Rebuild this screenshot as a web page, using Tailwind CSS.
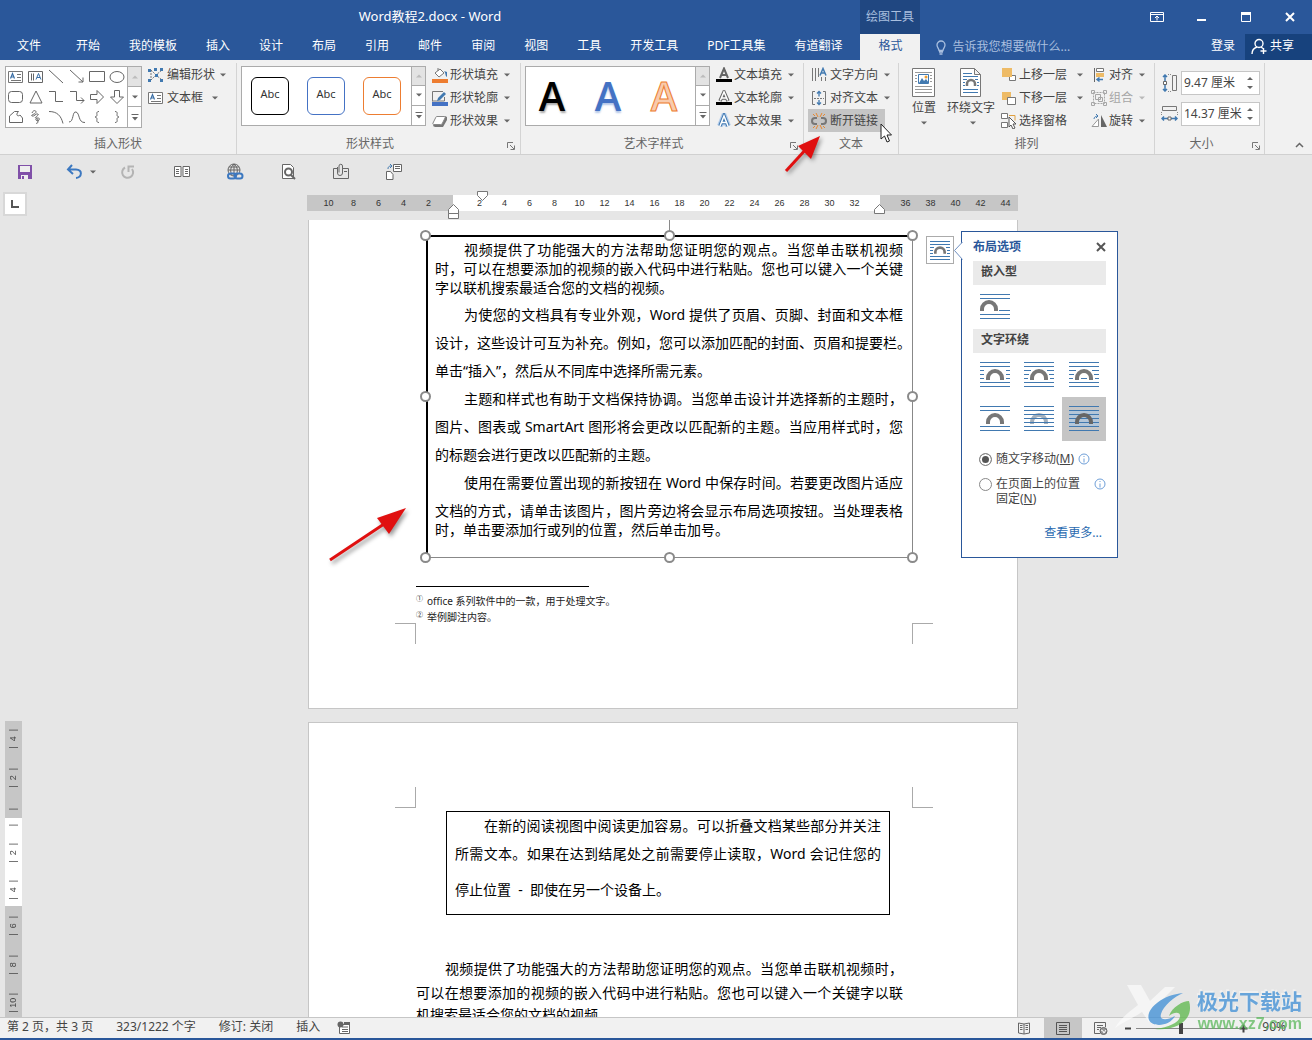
<!DOCTYPE html>
<html lang="zh-CN">
<head>
<meta charset="utf-8">
<title>Word教程2.docx - Word</title>
<script src="https://cdn.jsdelivr.net/npm/@tailwindcss/browser@4"></script>
</head>
<body class="relative flex h-screen flex-col overflow-hidden bg-[#e6e6e6] font-['Noto_Sans','Noto_Sans_CJK_SC',sans-serif] text-xs text-[#444]">

<!-- shared icons -->
<svg class="hidden">
  <symbol id="down" viewBox="0 0 6 4"><path d="M0 .5h6L3 3.5z" fill="#666"/></symbol>
  <symbol id="more" viewBox="0 0 8 7"><path d="M.5.5h7" stroke="#666"/><path d="M1 3h6L4 6.500z" fill="#666"/></symbol>
  <symbol id="launch" viewBox="0 0 8 8"><path d="M.5 6V.5H6M3 3l4 4M7.5 3.500v4h-4" fill="none" stroke="#777"/></symbol>
  <symbol id="arch" viewBox="0 0 18 11"><path d="M2 11V9a7 7 0 0 1 14 0v2" fill="none" stroke="currentColor" stroke-width="4"/></symbol>
  <symbol id="tbox" viewBox="0 0 16 14"><path d="M.5 1.500h14v11H.5z" fill="#fff" stroke="#777"/><path d="M9 4.500h4M9 7.500h4M3 10.500h10" stroke="#777"/><path d="M2.500 8.500l2-5 2 5M3.200 7h2.800" fill="none" stroke="#3a6ea5" stroke-width="1.200"/></symbol>
</svg>

<header class="flex h-[60px] shrink-0 flex-col bg-[#2a579a] text-white">
  <div class="flex h-[34px] items-center">
    <h1 class="w-[860px] text-center text-[13px]">Word教程2.docx - Word</h1>
    <div class="flex h-full w-[60px] items-center justify-center bg-[#204781] text-[#a9bfdf]">绘图工具</div>
    <div class="ml-auto flex items-center gap-8 pr-4">
      <button aria-label="功能区显示选项"><svg width="14" height="12" fill="none" stroke="#fff"><path d="M.5 1.500h13v9H.5zM.5 3.500h13M7 9.500V5M5 7l2-2 2 2"/></svg></button>
      <button aria-label="最小化"><svg width="12" height="12"><path d="M1 9h9" stroke="#fff" stroke-width="2"/></svg></button>
      <button aria-label="最大化"><svg width="12" height="12" fill="none" stroke="#fff"><path d="M1.500 2.500h9v8h-9z"/><path d="M1 2.500h10" stroke-width="3"/></svg></button>
      <button aria-label="关闭"><svg width="12" height="12"><path d="M2 2l8 8M10 2l-8 8" stroke="#fff" stroke-width="2"/></svg></button>
    </div>
  </div>
  <nav class="flex h-[26px] items-center pl-[3px] whitespace-nowrap [&>a]:mr-px [&>a]:self-start [&>a]:px-[14px] [&>a]:leading-6">
    <a href="#">文件</a><span class="w-1.5"></span>
    <a href="#">开始</a><a href="#">我的模板</a><a href="#">插入</a><a href="#">设计</a><a href="#">布局</a><a href="#">引用</a><a href="#">邮件</a><a href="#">审阅</a><a href="#">视图</a><a href="#">工具</a><a href="#">开发工具</a><a href="#">PDF工具集</a><a href="#">有道翻译</a>
    <button class="ml-[3px] h-full w-[60px] shrink-0 bg-[#f1f1f1] pb-0.5 text-[#2a579a]">格式</button>
    <button class="ml-4 flex items-center gap-1.5 text-[#a9bfdf]"><svg width="10" height="15" fill="none" stroke="#a9bfdf" stroke-width="1.300"><path d="M3 10.500C3 8.500 1 7.500 1 5a4 4 0 0 1 8 0c0 2.500-2 3.500-2 5.500zM3 12h4M3.500 14h3"/></svg>告诉我您想要做什么...</button>
    <button class="ml-auto px-2.5 pb-0.5">登录</button>
    <button class="flex h-full w-[67px] items-center gap-0.5 bg-[#17427d] pb-0.5 pl-1.5"><svg width="17" height="17" fill="none" stroke="#fff" stroke-width="1.400"><circle cx="8" cy="5.500" r="4"/><path d="M1 16c0-4 2-6 5-7M10 9l2 1.500M12.500 10v6M9.500 13h6"/></svg>共享</button>
  </nav>
</header>

<!-- ribbon -->
<div class="flex h-[95px] shrink-0 border-b border-[#d0d0d0] bg-[#f1f1f1] pt-[3px] whitespace-nowrap">
  <section class="flex w-[237px] shrink-0 flex-col border-r border-[#d4d4d4]">
    <div class="flex h-[71px] shrink-0 pl-[5px]">
      <div class="mt-[3px] flex h-[62px] w-[137px] border border-[#ababab] bg-white">
        <div class="grid flex-1 grid-cols-6 grid-rows-3 [&_svg]:h-4 [&_svg]:w-4 [&_svg]:fill-none [&_svg]:stroke-[#666] [&>button]:flex [&>button]:items-center [&>button]:justify-center">
          <button aria-label="文本框"><svg><use href="#tbox" width="16" height="14" y="1"/></svg></button>
          <button aria-label="竖排文本框"><svg><path d="M.5 2.500h14v11H.5zM3.500 4.500v7M5.500 4.500v7"/><path d="M8 10.500l2.500-6 2.500 6M9 8.500h3" stroke="#3a6ea5"/></svg></button>
          <button aria-label="直线"><svg><path d="M1 1l14 13"/></svg></button>
          <button aria-label="箭头"><svg><path d="M1 1l13 12M14 8.500V13H9.500"/></svg></button>
          <button aria-label="矩形"><svg><path d="M.5 2.500h15v10H.5z"/></svg></button>
          <button aria-label="椭圆"><svg><ellipse cx="8" cy="8" rx="7" ry="5.500"/></svg></button>
          <button aria-label="圆角矩形"><svg><rect x=".5" y="2.500" width="14" height="11" rx="3"/></svg></button>
          <button aria-label="三角形"><svg><path d="M8 2l6 12H2z"/></svg></button>
          <button aria-label="肘形线"><svg><path d="M1 2.500h6.500v10H15"/></svg></button>
          <button aria-label="肘形箭头"><svg><path d="M1 2.500h6.500v9H15M12 8.500l3 3-3 3"/></svg></button>
          <button aria-label="右箭头"><svg><path d="M1.500 5.500H8V1.500L14.500 8 8 14.500v-4H1.500z"/></svg></button>
          <button aria-label="下箭头"><svg><path d="M5.500 1.500h5V8h4L8 14.500 1.500 8h4z"/></svg></button>
          <button aria-label="任意多边形"><svg><path d="M1.500 13.500V7l5-4.500h4C7 6 10 8 12 6l2.500 3v4.500z"/></svg></button>
          <button aria-label="自由曲线"><svg><path d="M4 4c1-3 4-3 4-1S2 6 4 7s4-3 6-2-5 4-2 4 4 0 3 2-4 0-3-1 2 0 2 2-1 3-2 2"/></svg></button>
          <button aria-label="弧形"><svg><path d="M1 2.500c8 0 12 4 14 12"/></svg></button>
          <button aria-label="曲线"><svg><path d="M0 13C5 13 3 2 7 3s2 11 9 10.500"/></svg></button>
          <button aria-label="左大括号"><svg><path d="M10 2.500C7 2.500 8 5 8 6S7 8 6 8c1 0 2 1 2 2s-1 3.500 2 3.500"/></svg></button>
          <button aria-label="右大括号"><svg><path d="M6 2.500c3 0 2 2.500 2 3.500s1 2 2 2c-1 0-2 1-2 2s1 3.500-2 3.500"/></svg></button>
        </div>
        <div class="grid w-[14px] grid-rows-3 divide-y divide-[#ababab] border-l border-[#ababab] [&>button]:flex [&>button]:items-center [&>button]:justify-center">
          <button aria-label="上一行" class="bg-[#e3e3e3]"><svg class="rotate-180 opacity-30" width="6" height="4"><use href="#down"/></svg></button>
          <button aria-label="下一行"><svg width="6" height="4"><use href="#down"/></svg></button>
          <button aria-label="更多形状"><svg width="8" height="7"><use href="#more"/></svg></button>
        </div>
      </div>
      <div class="ml-1.5 flex flex-col [&>button]:flex [&>button]:h-[23px] [&>button]:items-center [&>button]:gap-[3px]">
        <button><svg width="16" height="16"><path d="M3 3l5 5 6-5M3 13l5-5 6 5M3 3v10" fill="none" stroke="#777" stroke-dasharray="2 1"/><path d="M0 2h3v3H0zM6 1h3v3H6zM12 1h3v3h-3zM0 12h3v3H0zM7 7h3v3H7zM12 12h3v3h-3z" fill="#4179b0"/></svg>编辑形状<svg class="ml-0.5" width="6" height="4"><use href="#down"/></svg></button>
        <button><svg width="16" height="14"><use href="#tbox"/></svg>文本框<svg class="ml-1.5" width="6" height="4"><use href="#down"/></svg></button>
      </div>
    </div>
    <h2 class="text-center leading-5 text-[#666]">插入形状</h2>
  </section>

  <section class="flex w-[284px] shrink-0 flex-col border-r border-[#d4d4d4]">
    <div class="flex h-[71px] shrink-0 pl-1">
      <div class="mt-[3px] flex h-[60px] w-[185px] border border-[#ababab] bg-white">
        <div class="flex flex-1 items-center gap-[18px] pl-[9px] text-[11px] text-[#333] [&>button]:h-[38px] [&>button]:w-[38px] [&>button]:rounded-md [&>button]:border [&>button]:pb-1">
          <button class="border-black">Abc</button>
          <button class="border-[#4472c4]">Abc</button>
          <button class="border-[#ed7d31]">Abc</button>
        </div>
        <div class="grid w-[14px] grid-rows-3 divide-y divide-[#ababab] border-l border-[#ababab] [&>button]:flex [&>button]:items-center [&>button]:justify-center">
          <button aria-label="上一行" class="bg-[#e3e3e3]"><svg class="rotate-180 opacity-30" width="6" height="4"><use href="#down"/></svg></button>
          <button aria-label="下一行"><svg width="6" height="4"><use href="#down"/></svg></button>
          <button aria-label="更多样式"><svg width="8" height="7"><use href="#more"/></svg></button>
        </div>
      </div>
      <div class="ml-1.5 flex flex-col [&>button]:flex [&>button]:h-[23px] [&>button]:items-center [&>button]:gap-0.5">
        <button><svg width="16" height="16"><path d="M3 6l5-4 4 4-5 4zM6 4V1" fill="#fff" stroke="#777"/><path d="M12 4l3 1v5c-2-1-1-4-3-6z" fill="#4179b0"/><path d="M0 12h16v4H0z" fill="#ed7d31"/></svg>形状填充<svg class="ml-1" width="6" height="4"><use href="#down"/></svg></button>
        <button><svg width="16" height="16"><path d="M11 1.500H.5v10M.5 11h12V7" fill="none" stroke="#777"/><path d="M5 11l1-3 6-6 2 2-6 6z" fill="#4179b0"/><path d="M0 12h16v4H0z" fill="#4472c4"/></svg>形状轮廓<svg class="ml-1" width="6" height="4"><use href="#down"/></svg></button>
        <button><svg width="16" height="16"><path d="M4 12l-2-1-1 2 2 1h8l4-7V4l-2-1z" fill="#777"/><path d="M5 3.500h7c1 0 1.500.5 1 1.500l-2.500 5c-.5 1-1 1.500-2 1.500H2c-1 0-1.500-.5-1-1.500l2.500-5c.3-1 .7-1.500 1.500-1.500z" fill="#fff" stroke="#888"/></svg>形状效果<svg class="ml-1" width="6" height="4"><use href="#down"/></svg></button>
      </div>
    </div>
    <div class="flex items-center"><h2 class="flex-1 text-center leading-5 text-[#666]">形状样式</h2><button class="mt-1 mr-[5px] ml-1" aria-label="形状格式"><svg width="8" height="8"><use href="#launch"/></svg></button></div>
  </section>

  <section class="flex w-[283px] shrink-0 flex-col border-r border-[#d4d4d4]">
    <div class="flex h-[71px] shrink-0 pl-1">
      <div class="mt-[3px] flex h-[60px] w-[185px] border border-[#ababab] bg-white">
        <div class="flex flex-1 items-center gap-8 pl-[14px] font-['Open_Sans'] text-[40px] leading-[58px] font-semibold [&>button]:flex [&>button]:w-6 [&>button]:justify-center">
          <button class="text-black [text-shadow:1px_2px_2px_#aaa]">A</button>
          <button class="text-[#4472c4] [text-shadow:0_2px_2px_#b4c7e7]">A</button>
          <button class="text-[#f8cbad] [-webkit-text-stroke:1px_#ed7d31]">A</button>
        </div>
        <div class="grid w-[14px] grid-rows-3 divide-y divide-[#ababab] border-l border-[#ababab] [&>button]:flex [&>button]:items-center [&>button]:justify-center">
          <button aria-label="上一行" class="bg-[#e3e3e3]"><svg class="rotate-180 opacity-30" width="6" height="4"><use href="#down"/></svg></button>
          <button aria-label="下一行"><svg width="6" height="4"><use href="#down"/></svg></button>
          <button aria-label="更多样式"><svg width="8" height="7"><use href="#more"/></svg></button>
        </div>
      </div>
      <div class="ml-1.5 flex flex-col [&>button]:flex [&>button]:h-[23px] [&>button]:items-center [&>button]:gap-0.5">
        <button><svg width="16" height="16"><path d="M4 11l4-9.500L12 11M5.500 8h5" fill="none" stroke="#666" stroke-width="2"/><path d="M0 12h16v3H0z" fill="#000"/></svg>文本填充<svg class="ml-1" width="6" height="4"><use href="#down"/></svg></button>
        <button><svg width="16" height="16"><path d="M4 11l4-9L12 11M5.500 8h5" fill="none" stroke="#666" stroke-width="3.500"/><path d="M4.300 10.500L8 2l3.700 8.500M5.500 8h5" fill="none" stroke="#fff" stroke-width="1.500"/><path d="M0 12h16v3H0z" fill="#000"/></svg>文本轮廓<svg class="ml-1" width="6" height="4"><use href="#down"/></svg></button>
        <button><svg width="16" height="16"><path d="M4 13l4-10L12 13M5.500 9.500h5" fill="none" stroke="#b4cdeb" stroke-width="6"/><path d="M4 13l4-10L12 13M5.500 9.500h5" fill="none" stroke="#4179b0" stroke-width="3.500"/><path d="M4 13l4-10L12 13M5.500 9.500h5" fill="none" stroke="#fff" stroke-width="1.500"/></svg>文本效果<svg class="ml-1" width="6" height="4"><use href="#down"/></svg></button>
      </div>
    </div>
    <div class="flex items-center"><h2 class="flex-1 text-center leading-5 text-[#666]">艺术字样式</h2><button class="mt-1 mr-[5px] ml-1" aria-label="文本效果格式"><svg width="8" height="8"><use href="#launch"/></svg></button></div>
  </section>

  <section class="flex w-[95px] shrink-0 flex-col border-r border-[#d4d4d4]">
    <div class="flex h-[71px] shrink-0 flex-col items-start pl-1 [&>button]:flex [&>button]:h-[23px] [&>button]:items-center [&>button]:gap-0.5 [&>button]:pl-[3px]">
      <button><svg width="17" height="16"><path d="M1.500 1v13M4.500 1v13M7.500 1v9M10.500 10v4M14.500 10v4" stroke="#777"/><path d="M9 8.500l3-7 3 7M10 6h4" fill="none" stroke="#4179b0" stroke-width="1.500"/></svg>文字方向<svg class="ml-1" width="6" height="4"><use href="#down"/></svg></button>
      <button><svg width="17" height="16"><path d="M4 1.500H1.500v13H4M12 1.500h2.500v13H12" fill="none" stroke="#777"/><path d="M3 8.500h10" stroke="#777" stroke-dasharray="2 1"/><path d="M8 6.500V1M6 3.500l2-2 2 2M8 10v5M6 12.500l2 2 2-2" fill="none" stroke="#4179b0" stroke-width="1.300"/></svg>对齐文本<svg class="ml-1" width="6" height="4"><use href="#down"/></svg></button>
      <button class="w-[77px] bg-[#c5c5c5]"><svg width="17" height="16"><path d="M6 5H4a3 3 0 0 0 0 6h2M10 5h2a3 3 0 0 1 0 6h-2" fill="none" stroke="#777" stroke-width="2"/><path d="M7 4L5 0M9 4l2-4M4 3L2 1M12 3l2-2M7 12l-2 4M9 12l2 4M4 13l-2 2M12 13l2 2" stroke="#e8872e"/></svg>断开链接</button>
    </div>
    <h2 class="text-center leading-5 text-[#666]">文本</h2>
  </section>

  <section class="flex w-[256px] shrink-0 flex-col border-r border-[#d4d4d4]">
    <div class="flex h-[71px] shrink-0 pl-[13px]">
      <button class="flex w-6 flex-col items-center pt-[5px]"><svg width="24" height="29"><path d="M.5.500h22v28H.5z" fill="#fff" stroke="#777"/><path d="M3 4.500h17M3 7.500h2M18 7.500h2M3 10.500h2M18 10.500h2M3 13.500h2M18 13.500h2M3 18.500h17M3 21.500h17M3 24.500h17" stroke="#999"/><path d="M6.500 6.500h10v9h-10z" fill="#fff" stroke="#4179b0"/><path d="M7 15l3-5 2 3 2-2 3 4z" fill="#4179b0"/><circle cx="14" cy="9" r="1.500" fill="#ed9d31"/></svg><span class="mt-px leading-5">位置</span><svg class="mt-[3px]" width="6" height="4"><use href="#down"/></svg></button>
      <button class="ml-[11px] flex w-12 flex-col items-center pt-[5px]"><svg width="24" height="29"><path d="M1.500.500h14l6 6v22h-20zM15.500.500v6h6" fill="#fff" stroke="#777"/><path d="M4 5.500h9M4 8.500h15M4 11.500h4M16 11.500h3M4 14.500h2M18 14.500h2M4 17.500h2M18 17.500h2M4 21.500h15M4 24.500h15" stroke="#4179b0"/><path d="M8 18v-2a4 4 0 0 1 8 0v2" fill="none" stroke="#777" stroke-width="2.500"/></svg><span class="mt-px leading-5">环绕文字</span><svg class="mt-[3px] ml-1" width="6" height="4"><use href="#down"/></svg></button>
      <div class="ml-1.5 flex w-[82px] flex-col [&>button]:flex [&>button]:h-[23px] [&>button]:items-center [&>button]:gap-0.5">
        <button><svg width="16" height="16"><path d="M8.500 8.500h6v5h-6z" fill="#fff" stroke="#777"/><path d="M1 1h10v9H1z" fill="#eebb66"/></svg>上移一层<svg class="ml-auto" width="6" height="4"><use href="#down"/></svg></button>
        <button><svg width="16" height="16"><path d="M1 2h9v8H1z" fill="#eebb66"/><path d="M6.500 7.500h8v7h-8z" fill="#fff" stroke="#777"/></svg>下移一层<svg class="ml-auto" width="6" height="4"><use href="#down"/></svg></button>
        <button><svg width="16" height="16"><path d="M.5.500h6v5h-6zM.5 9.500h6v5h-6z" fill="#fff" stroke="#777"/><path d="M8 2.500h6v5" fill="none" stroke="#e0a040"/><path d="M8 4v10l2-2 2 4 2-1-2-4h3z" fill="#fff" stroke="#555"/></svg>选择窗格</button>
      </div>
      <div class="ml-2 flex flex-col [&>button]:flex [&>button]:h-[23px] [&>button]:items-center [&>button]:gap-0.5">
        <button><svg width="16" height="16"><path d="M3.500 1v14" stroke="#666"/><path d="M5.500 1.500h7v3h-7z" fill="#fff" stroke="#777"/><path d="M5 6h8v4H5z" fill="#eebb66"/><path d="M12 12.500H6M8.500 10.500L6 12.500l2.500 2" fill="none" stroke="#4179b0" stroke-width="1.500"/></svg>对齐<svg class="ml-1" width="6" height="4"><use href="#down"/></svg></button>
        <button class="text-[#a6a6a6]"><svg width="16" height="16" fill="none" stroke="#a6a6a6"><path d="M2.500 2.500h11v11h-11z" stroke-dasharray="2 1"/><path d="M4.500 4.500h5v5h-5zM7.500 7.500h4v4h-4zM.5.500h3v3h-3zM12.500.500h3v3h-3zM.5 12.500h3v3h-3zM12.500 12.500h3v3h-3z"/></svg>组合<svg class="ml-1 opacity-40" width="6" height="4"><use href="#down"/></svg></button>
        <button><svg width="16" height="16"><path d="M1 13.500h6.500V6z" fill="#fff" stroke="#999"/><path d="M10 2v12h6z" fill="#666"/><path d="M3 6c0-2 2-3 4-3M5 1l2 2-2 2" fill="none" stroke="#4179b0"/></svg>旋转<svg class="ml-1" width="6" height="4"><use href="#down"/></svg></button>
      </div>
    </div>
    <h2 class="text-center leading-5 text-[#666]">排列</h2>
  </section>

  <section class="flex w-[110px] shrink-0 flex-col border-r border-[#d4d4d4]">
    <div class="flex h-[71px] shrink-0 flex-col gap-[7px] pt-2 pl-1.5">
      <label class="flex items-center gap-0.5"><svg width="18" height="18" fill="none"><path d="M4 1v16M2 3l2-2 2 2M2 15l2 2 2-2" stroke="#4179b0" stroke-width="1.500"/><path d="M2.500 7.500h3v3h-3z" fill="#fff" stroke="#666"/><path d="M7 .500h3M7 17.500h3" stroke="#888" stroke-dasharray="1 1"/><path d="M11.500 1.500h4v15h-4z" stroke="#777"/></svg><span class="flex h-6 w-[79px] items-center border border-[#c6c6c6] bg-white pr-1.5"><input aria-label="高度" value="9.47 厘米" class="w-full min-w-0 pl-0.5 outline-none"><svg class="shrink-0" width="6" height="14"><path d="M0 4h6L3 1zM0 10h6l-3 3z" fill="#666"/></svg></span></label>
      <label class="flex items-center gap-0.5"><svg width="18" height="18" fill="none"><path d="M1.500 1.500h14v4h-14z" stroke="#777"/><path d="M.5 7v3M16.500 7v3" stroke="#888" stroke-dasharray="1 1"/><path d="M1 13.500h15M3 11.500l-2 2 2 2M14 11.500l2 2-2 2" stroke="#4179b0" stroke-width="1.500"/><path d="M7 12h3v3H7z" fill="#fff" stroke="#666"/></svg><span class="flex h-6 w-[79px] items-center border border-[#c6c6c6] bg-white pr-1.5"><input aria-label="宽度" value="14.37 厘米" class="w-full min-w-0 pl-0.5 outline-none"><svg class="shrink-0" width="6" height="14"><path d="M0 4h6L3 1zM0 10h6l-3 3z" fill="#666"/></svg></span></label>
    </div>
    <div class="flex items-center"><h2 class="flex-1 text-center leading-5 text-[#666]">大小</h2><button class="mt-1 mr-1 ml-1" aria-label="布局"><svg width="8" height="8"><use href="#launch"/></svg></button></div>
  </section>
  <button class="mt-auto mr-2 mb-1.5 ml-auto" aria-label="折叠功能区"><svg width="9" height="6"><path d="M1 5l3.500-3.500L8 5" fill="none" stroke="#666" stroke-width="1.500"/></svg></button>
</div>

<!-- quick access -->
<div class="flex h-[35px] shrink-0 items-center pb-0.5 pl-4">
  <button aria-label="保存"><svg width="18" height="16"><path d="M2 1h14v14H2z" fill="#8050a8"/><path d="M4 2h10v6H4zM5 11h7v4H5z" fill="#eee"/><path d="M6 12h2v3H6z" fill="#8050a8"/></svg></button>
  <button aria-label="撤消" class="ml-8"><svg width="18" height="16" fill="none" stroke="#3c78c0" stroke-width="2"><path d="M2 5.500h8c7 0 6 8 0 8.500M6 1L2 5.500 7 10"/></svg></button>
  <button aria-label="撤消列表" class="ml-1.5"><svg width="6" height="4"><use href="#down"/></svg></button>
  <button aria-label="重复" class="ml-[23px]"><svg width="18" height="16" fill="none" stroke="#b4b4b4" stroke-width="2"><path d="M6 3.500a5.500 5.500 0 1 0 7 1.500M9.500 8V2.500H15"/></svg></button>
  <button aria-label="双页" class="ml-9"><svg width="18" height="16" fill="#fff" stroke="#666"><path d="M1.500 2.500H8v10H1.500zM10 2.500h6.500v10H10z"/><path d="M3 5.500h3M3 7.500h3M3 9.500h3M12 5.500h3M12 7.500h3M12 9.500h3"/></svg></button>
  <button aria-label="超链接" class="ml-[35px]"><svg width="18" height="18" fill="none"><circle cx="8" cy="7" r="6" stroke="#666"/><path d="M8 1v12M2 7h12M3 4h10M8 1C4 4 4 9 6 12M8 1c4 3 4 8 2 11" stroke="#666"/><rect x="2" y="10.500" width="8" height="5" rx="2.500" stroke="#3c78c0" stroke-width="2"/><rect x="8.500" y="10.500" width="8" height="5" rx="2.500" stroke="#3c78c0" stroke-width="2"/></svg></button>
  <button aria-label="打印预览" class="ml-[35px]"><svg width="18" height="18" fill="none" stroke="#666"><path d="M3.500 1.500h8l3 3v11h-11z" fill="#fff"/><circle cx="9.500" cy="9" r="3.500" stroke-width="2" fill="#fff"/><path d="M12 12l4 4" stroke-width="2"/></svg></button>
  <button aria-label="附件" class="ml-[35px]"><svg width="18" height="18" fill="none" stroke="#666"><path d="M5 5.500H1.500v10h15v-10H11M12 8.500h3"/><path d="M5.500 4v6a2.500 2.500 0 0 0 5 0V3a1.700 1.700 0 0 0-3.500 0v6.500"/></svg></button>
  <button aria-label="复制格式" class="ml-[35px]"><svg width="18" height="18" fill="#fff" stroke="#666"><path d="M1.500 8.500h4l2.500 3v5H1.500zM8.500 1.500h8v7h-8z"/><path d="M10 3.500h5M10 5.500h5"/><path d="M3 6c0-3 2-3 4-3M5 1l2 2-2 2" fill="none" stroke="#4179b0"/></svg></button>
</div>

<!-- ruler -->
<div class="relative flex h-[30px] shrink-0 items-start justify-center pl-[13px] text-[9px] leading-4 text-[#333]">
  <button aria-label="左对齐制表符" class="absolute top-0.5 left-[3px] flex h-6 w-6 items-center justify-center border-2 border-[#d8d8d8] bg-white"><svg width="10" height="10"><path d="M2 1v7h7" fill="none" stroke="#555" stroke-width="2"/></svg></button>
  <div class="relative mt-[5px] flex h-4 w-[711px] font-['Liberation_Sans'] [&_span]:w-[25px] [&_span]:text-center">
    <div class="flex w-[146px] bg-[#c6c6c6] pl-[9px]"><span>10</span><span>8</span><span>6</span><span>4</span><span>2</span></div>
    <div class="flex w-[427px] bg-white pl-[14px]"><span>2</span><span>4</span><span>6</span><span>8</span><span>10</span><span>12</span><span>14</span><span>16</span><span>18</span><span>20</span><span>22</span><span>24</span><span>26</span><span>28</span><span>30</span><span>32</span></div>
    <div class="flex flex-1 bg-[#c6c6c6] pl-[13px]"><span>36</span><span>38</span><span>40</span><span>42</span><span>44</span></div>
    <svg class="absolute top-2 left-[141px]" width="12" height="17" fill="#fff" stroke="#777"><path d="M5.500 1.500l5 5v4H.5v-4zM.5 10.500h10v5H.5z"/></svg>
    <svg class="absolute -top-1 left-[170px]" width="12" height="12" fill="#fff" stroke="#777"><path d="M.5.500h10v4l-5 5-5-5z"/></svg>
    <svg class="absolute top-2 left-[567px]" width="12" height="12" fill="#fff" stroke="#777"><path d="M5.500 1.500l5 5v4H.5v-4z"/></svg>
  </div>
</div>

<!-- document -->
<main class="relative flex min-h-0 flex-1 justify-center overflow-hidden pl-[14px]">
  <div class="absolute top-[501px] left-[5px] flex w-[17px] flex-col bg-[#c6c6c6] font-['Liberation_Sans'] text-[9px] text-[#444] [&_span]:w-[17px] [&_span]:rotate-180 [&_span]:text-center [&_span]:leading-[17px] [&_span]:whitespace-pre [&_span]:[writing-mode:vertical-rl]">
    <div class="flex h-[97px] flex-col justify-between py-2"><span>|  4  |</span><span>|  2  |</span><span>|</span></div>
    <div class="flex h-[88px] flex-col justify-between bg-white py-1.5"><span>|</span><span>|  2  |</span><span>|  4  |</span></div>
    <div class="flex h-[111px] flex-col justify-between pt-2.5 pb-1"><span>|  6  |</span><span>|  8  |</span><span>| 10 |</span></div>
  </div>

  <div class="relative flex w-[710px] shrink-0 flex-col gap-[13px] text-sm text-black [&_.jf]:[text-align-last:justify] [&_.ln]:block [&_.ln]:whitespace-nowrap">
    <article class="relative h-[489px] shrink-0 border border-t-0 border-[#c6c6c6] bg-white">
      <div class="mt-[15px] ml-[117px] h-[323px] w-[487px] border-t-2 border-r border-b border-l-2 border-t-black border-r-[#888] border-b-[#888] border-l-black pt-[3px] pr-[9px] pl-[7px] leading-7">
        <p class="leading-[19px]"><span class="ln jf pl-[29px]">视频提供了功能强大的方法帮助您证明您的观点。当您单击联机视频</span><span class="ln jf">时，可以在想要添加的视频的嵌入代码中进行粘贴。您也可以键入一个关键</span><span class="ln">字以联机搜索最适合您的文档的视频。</span></p>
        <p class="mt-1"><span class="ln jf pl-[29px]">为使您的文档具有专业外观，Word 提供了页眉、页脚、封面和文本框</span><span class="ln jf">设计，这些设计可互为补充。例如，您可以添加匹配的封面、页眉和提要栏。</span><span class="ln">单击“插入”，然后从不同库中选择所需元素。</span></p>
        <p><span class="ln jf pl-[29px]">主题和样式也有助于文档保持协调。当您单击设计并选择新的主题时，</span><span class="ln jf">图片、图表或 SmartArt 图形将会更改以匹配新的主题。当应用样式时，您</span><span class="ln">的标题会进行更改以匹配新的主题。</span></p>
        <p><span class="ln jf pl-[29px]">使用在需要位置出现的新按钮在 Word 中保存时间。若要更改图片适应</span><span class="ln jf mt-1 leading-[19px]">文档的方式，请单击该图片，图片旁边将会显示布局选项按钮。当处理表格</span><span class="ln leading-[19px]">时，单击要添加行或列的位置，然后单击加号。</span></p>
      </div>
      <div class="mt-7 ml-[107px] w-[173px] border-t border-black"></div>
      <ol class="mt-1.5 ml-[107px] text-[10px] leading-4 text-[#222]">
        <li class="flex gap-1"><span class="w-[7px] pb-1 text-[7px] leading-3">①</span>office 系列软件中的一款，用于处理文字。</li>
        <li class="flex gap-1"><span class="w-[7px] pb-1 text-[7px] leading-3">②</span>举例脚注内容。</li>
      </ol>
      <!-- margin corners -->
      <div class="absolute top-[403px] left-[86px] h-[21px] w-[21px] border-t border-r border-[#aaa]"></div>
      <div class="absolute top-[403px] left-[603px] h-[21px] w-[21px] border-t border-l border-[#aaa]"></div>
      <!-- selection handles -->
      <svg class="absolute top-0 left-[111px]" width="500" height="350" fill="#fff" stroke="#8a8a8a" stroke-width="2"><path d="M249.500 0v12" stroke-width="1"/><circle cx="5.500" cy="15.500" r="4.500"/><circle cx="249.500" cy="15.500" r="4.500"/><circle cx="492.500" cy="15.500" r="4.500"/><circle cx="5.500" cy="176.500" r="4.500"/><circle cx="492.500" cy="176.500" r="4.500"/><circle cx="5.500" cy="337.500" r="4.500"/><circle cx="249.500" cy="337.500" r="4.500"/><circle cx="492.500" cy="337.500" r="4.500"/></svg>
    </article>

    <article class="relative h-[900px] shrink-0 border border-[#c6c6c6] bg-white">
      <div class="mt-[88px] ml-[137px] h-[104px] w-[444px] border border-black px-2 leading-7">
        <p><span class="ln jf pl-[29px]">在新的阅读视图中阅读更加容易。可以折叠文档某些部分并关注</span><span class="ln jf">所需文本。如果在达到结尾处之前需要停止读取，Word 会记住您的</span><span class="ln mt-2">停止位置&nbsp; -&nbsp; 即使在另一个设备上。</span></p>
      </div>
      <p class="mt-[42px] ml-[107px] w-[487px] leading-6"><span class="ln jf pl-[29px]">视频提供了功能强大的方法帮助您证明您的观点。当您单击联机视频时，</span><span class="ln jf">可以在想要添加的视频的嵌入代码中进行粘贴。您也可以键入一个关键字以联</span><span class="ln leading-5">机搜索最适合您的文档的视频。</span></p>
      <div class="absolute top-[64px] left-[86px] h-[21px] w-[21px] border-r border-b border-[#aaa]"></div>
      <div class="absolute top-[64px] left-[603px] h-[21px] w-[21px] border-b border-l border-[#aaa]"></div>
    </article>

    <button aria-label="布局选项" class="absolute top-[16px] left-[618px] flex h-7 w-7 items-center justify-center border border-[#ababab] bg-white text-[#777]"><svg width="22" height="20" stroke="#4179b0"><path d="M1 1.500h20M1 4.500h20M1 7.500h4M17 7.500h4M1 10.500h3M18 10.500h3M1 13.500h3M18 13.500h3M1 16.500h20M1 19.500h20"/><use href="#arch" x="5" y="6" width="12" height="8" stroke="none"/></svg></button>

    <!-- layout options flyout -->
    <section class="absolute top-[11px] left-[653px] flex h-[327px] w-[157px] flex-col border border-[#2a579a] bg-white px-[11px] pt-[3px] text-xs text-[#444]">
      <svg class="absolute top-[9px] -left-2" width="9" height="20"><path d="M8.500 1L.5 9.500l8 9" fill="#fff" stroke="#6f8fc0"/></svg>
      <div class="flex h-[26px] items-center justify-between pb-0.5"><h2 class="font-bold text-[#2a579a]">布局选项</h2><button aria-label="关闭"><svg width="10" height="10"><path d="M1 1l8 8M9 1L1 9" stroke="#555" stroke-width="2"/></svg></button></div>
      <h3 class="h-6 bg-[#eaeaea] pl-2 leading-[22px] font-semibold">嵌入型</h3>
      <button aria-label="嵌入型" class="flex h-11 w-11 items-center justify-center text-[#777]"><svg width="30" height="28" stroke="#4179b0"><path d="M0 1.500h30M0 5.500h30M19 17.500h11M0 21.500h30M0 25.500h30"/><use href="#arch" y="7" width="18" height="11" stroke="none"/></svg></button>
      <h3 class="h-6 bg-[#eaeaea] pl-2 leading-[22px] font-semibold">文字环绕</h3>
      <div class="grid grid-cols-3 text-[#777] [&>button]:flex [&>button]:h-11 [&>button]:items-center [&>button]:justify-center">
        <button aria-label="四周型"><svg width="30" height="28" stroke="#4179b0"><path d="M0 1.500h30M0 5.500h30M0 9.500h4M26 9.500h4M0 13.500h4M26 13.500h4M0 17.500h4M26 17.500h4M0 21.500h30M0 25.500h30"/><use href="#arch" x="6" y="8" width="18" height="11"/></svg></button>
        <button aria-label="紧密型环绕"><svg width="30" height="28" stroke="#4179b0"><path d="M0 1.500h30M0 5.500h30M0 9.500h7M23 9.500h7M0 13.500h5M25 13.500h5M0 17.500h4M26 17.500h4M0 21.500h30M0 25.500h30"/><use href="#arch" x="6" y="8" width="18" height="11"/></svg></button>
        <button aria-label="穿越型环绕"><svg width="30" height="28" stroke="#4179b0"><path d="M0 1.500h30M0 5.500h30M0 9.500h7M23 9.500h7M0 13.500h5M25 13.500h5M0 17.500h4M12 17.500h6M26 17.500h4M0 21.500h30M0 25.500h30"/><use href="#arch" x="6" y="8" width="18" height="11"/></svg></button>
        <button aria-label="上下型环绕"><svg width="30" height="28" stroke="#4179b0"><path d="M0 1.500h30M0 5.500h30M0 21.500h30M0 25.500h30"/><use href="#arch" x="6" y="8" width="18" height="11"/></svg></button>
        <button aria-label="衬于文字下方" class="text-[#a4b0bc]"><svg width="30" height="28" stroke="#4179b0"><use href="#arch" x="6" y="8" width="18" height="11"/><path d="M0 1.500h30M0 5.500h30M0 9.500h30M0 13.500h30M0 17.500h30M0 21.500h30M0 25.500h30"/></svg></button>
        <button aria-label="浮于文字上方" class="bg-[#c5c5c5] text-[#666]"><svg width="30" height="28" stroke="#4179b0"><path d="M0 5h30v17H0z" fill="#b4c6d8" stroke="none"/><path d="M0 1.500h30M0 5.500h30M0 9.500h30M0 13.500h30M0 17.500h30M0 21.500h30M0 25.500h30"/><use href="#arch" x="6" y="8" width="18" height="11"/></svg></button>
      </div>
      <label class="mt-[7px] flex items-center pl-1.5 leading-[22px]"><input type="radio" name="anchor" checked class="mr-1 h-[13px] w-[13px] appearance-none rounded-full border border-[#888] bg-white checked:bg-[#555] checked:[box-shadow:inset_0_0_0_2px_white]"><span>随文字移动(<u>M</u>)</span><svg class="ml-1" width="12" height="12" fill="none" stroke="#6f9fd8"><circle cx="6" cy="6" r="5"/><path d="M6 3v1M6 5.500v4"/></svg></label>
      <label class="mt-1.5 flex items-start pl-1.5 leading-[15px]"><input type="radio" name="anchor" class="mt-0.5 mr-1 h-[13px] w-[13px] appearance-none rounded-full border border-[#888] bg-white"><span>在页面上的位置<br>固定(<u>N</u>)</span><svg class="mt-0.5 ml-auto" width="12" height="12" fill="none" stroke="#6f9fd8"><circle cx="6" cy="6" r="5"/><path d="M6 3v1M6 5.500v4"/></svg></label>
      <a href="#" class="mt-[17px] self-end pr-1 leading-5 text-[#2a6ab0]">查看更多...</a>
    </section>

    <!-- annotation arrow -->
    <svg class="absolute top-[284px] left-[19px] overflow-visible drop-shadow-[2px_3px_2px_rgba(0,0,0,0.4)]" width="84" height="60"><path d="M3 56L60 18" stroke="#e01010" stroke-width="3"/><path d="M79 4L50 14l12 16z" fill="#e01010"/></svg>
  </div>
</main>

<footer class="flex h-[23px] shrink-0 items-center border-t border-b-2 border-t-[#c6c6c6] border-b-[#2a579a] bg-[#f1f1f1] pl-[7px] whitespace-nowrap">
  <div class="flex items-center pb-0.5"><span>第 2 页，共 3 页</span><span class="ml-[23px]">323/1222 个字</span><span class="ml-[23px]">修订: 关闭</span><span class="ml-[23px]">插入</span></div>
  <button aria-label="宏" class="ml-[17px]"><svg width="14" height="14"><path d="M2.500 3.500h10v9h-10zM5 6h6M5 8.500h6M5 10.500h6" fill="#fff" stroke="#666"/><path d="M7 1h6v3H7z" fill="#666"/><circle cx="3.500" cy="3.500" r="3" fill="#666"/></svg></button>
  <div class="ml-auto flex h-full items-center pr-[26px]">
    <button aria-label="阅读视图" class="flex h-full w-10 items-center justify-center"><svg width="14" height="13" fill="none" stroke="#666"><path d="M7 2L1.500 1v10L7 12l5.500-1V1zM7 2v10M3 3.500h2.500M3 5.500h2.500M3 7.500h2.500M8.500 3.500H11M8.500 5.500H11M8.500 7.500H11"/></svg></button>
    <button aria-label="页面视图" class="flex h-full w-[38px] items-center justify-center bg-[#c6c6c6]"><svg width="14" height="13" fill="none" stroke="#555"><path d="M.5.500h13v12H.5zM3 3.500h8M3 5.500h8M3 7.500h8M3 9.500h8"/></svg></button>
    <button aria-label="Web 版式视图" class="flex h-full w-[38px] items-center justify-center"><svg width="14" height="13" fill="none" stroke="#666"><path d="M6 11.500H.5V.500h11V5M3 3.500h6M3 5.500h4M3 7.500h2"/><circle cx="9.500" cy="9" r="3.500" fill="#999"/><path d="M7 8l2 1 1 2 2-3" stroke="#fff"/></svg></button>
    <button aria-label="缩小" class="ml-1"><svg width="8" height="8"><path d="M1 4.500h6" stroke="#444" stroke-width="2"/></svg></button>
    <input type="range" aria-label="显示比例" value="43" class="ml-1 h-px w-[103px] appearance-none bg-[#888] [&::-webkit-slider-thumb]:h-[11px] [&::-webkit-slider-thumb]:w-1 [&::-webkit-slider-thumb]:appearance-none [&::-webkit-slider-thumb]:bg-[#444]">
    <button aria-label="放大"><svg width="9" height="9"><path d="M.5 4.500h8M4.500.500v8" stroke="#444" stroke-width="2"/></svg></button>
    <span class="ml-[14px] pb-0.5">90%</span>
  </div>
</footer>

<!-- annotation arrow and pointer over the ribbon -->
<svg class="pointer-events-none absolute top-[133px] left-[782px] overflow-visible drop-shadow-[2px_2px_2px_rgba(0,0,0,0.4)]" width="40" height="40"><path d="M4 38L26 14" stroke="#e01010" stroke-width="3"/><path d="M38 3L16 13l13 13z" fill="#e01010"/></svg>
<svg class="pointer-events-none absolute top-[123px] left-[880px]" width="13" height="20"><path d="M1 1v15l3.500-3 2.500 6 2.500-1L7 12h4.500z" fill="#fff" stroke="#222"/></svg>

<!-- site watermark -->
<div class="pointer-events-none absolute right-2.5 bottom-1 flex items-end opacity-75">
  <svg width="82" height="52"><path d="M12 1h14l9 16L50 3h10L39 24l8 14H34l-7-10C18 34 8 38 0 44c6-10 14-16 23-23z" fill="#fff" opacity=".8"/><path d="M68 9C46 11 30 26 34 36c4 8 21 6 26-4-9 5-16 4-14-2 2-8 13-17 22-21z" fill="#3d8fd6"/><path d="M74 17C79 33 66 47 40 45c14-2 23-6 25-12 1-5-5-6-11-1 3-9 14-15 20-15z" fill="#5cb84a"/></svg>
  <div class="flex flex-col items-end leading-none"><span class="text-[21px] font-bold text-[#3d8fd6] [text-shadow:-1px_-2px_0_#f4f4f4]">极光下载站</span><span class="font-['Liberation_Sans'] text-base font-bold text-[#5cb85c]">www.xz7.com</span></div>
</div>
</body>
</html>
